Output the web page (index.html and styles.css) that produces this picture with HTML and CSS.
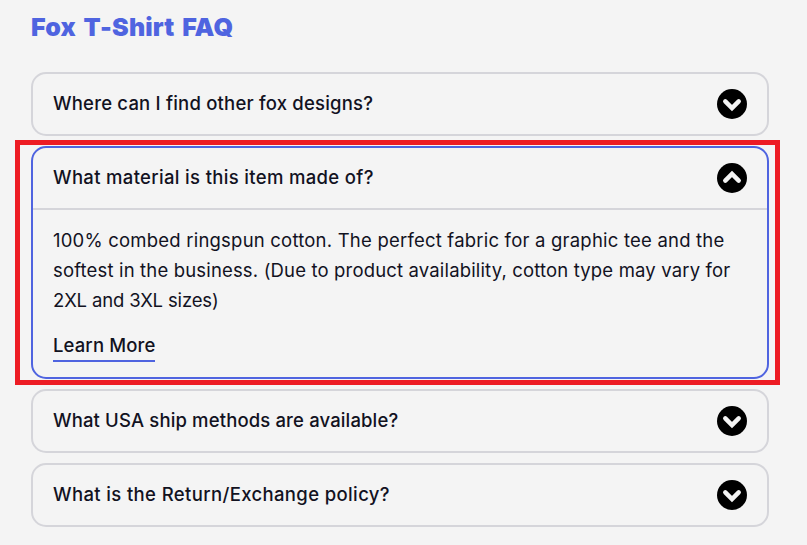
FILE: index.html
```html
<!DOCTYPE html>
<html lang="en">
<head>
  <meta charset="UTF-8">
  <meta name="viewport" content="width=device-width, initial-scale=1.0">
  <title>Fox T-Shirt FAQ</title>
  <link rel="stylesheet" href="styles.css">
</head>
<body>
  <section class="faq">
    <h2>Fox T-Shirt FAQ</h2>

    <div class="faq-list">
      <div class="faq-item">
        <button class="faq-question">
          <span class="q-designs">Where can I find other fox designs?</span>
          <svg class="faq-icon" viewBox="0 0 30 30"><circle cx="15" cy="15" r="15"/><path d="M8.3 12.3L15 19L21.7 12.3"/></svg>
        </button>
      </div>

      <div class="faq-item open">
        <button class="faq-question">
          <span class="q-material">What material is this item made of?</span>
          <svg class="faq-icon" viewBox="0 0 30 30"><circle cx="15" cy="15" r="15"/><path d="M8.3 12.3L15 19L21.7 12.3"/></svg>
        </button>
        <div class="faq-answer">
          <p>
            <span class="line line-1">100% combed ringspun cotton. The perfect fabric for a graphic tee and the</span>
            <span class="line line-2">softest in the business. (Due to product availability, cotton type may vary for</span>
            <span class="line line-3">2XL and 3XL sizes)</span>
          </p>
          <a href="#" class="learn-more">Learn More</a>
        </div>
        <div class="highlight"></div>
      </div>

      <div class="faq-item">
        <button class="faq-question">
          <span class="q-shipping">What USA ship methods are available?</span>
          <svg class="faq-icon" viewBox="0 0 30 30"><circle cx="15" cy="15" r="15"/><path d="M8.3 12.3L15 19L21.7 12.3"/></svg>
        </button>
      </div>

      <div class="faq-item">
        <button class="faq-question">
          <span class="q-returns">What is the Return/Exchange policy?</span>
          <svg class="faq-icon" viewBox="0 0 30 30"><circle cx="15" cy="15" r="15"/><path d="M8.3 12.3L15 19L21.7 12.3"/></svg>
        </button>
      </div>
    </div>
  </section>
</body>
</html>
```

FILE: styles.css
```css
* {
  box-sizing: border-box;
}
body {
  margin: 0;
  background-color: #f4f4f4;
  color: #12121f;
  font-family: Inter, "Liberation Sans", sans-serif;
}
.faq {
  width: 738px;
  margin-left: 31px;
  padding-top: 10px;
}
h2 {
  margin: 0 0 28px;
  color: #4f64e0;
  font-size: 25px;
  font-weight: 900;
  line-height: 34px;
  letter-spacing: 0.15px;
  word-spacing: 2.5px;
}
.faq-list {
  display: flex;
  flex-direction: column;
  gap: 10px;
}
.faq-item {
  position: relative;
  border: 2px solid #d5d5da;
  border-radius: 15px;
}
.faq-item.open {
  height: 233px;
  border-color: #4f64e0;
}
.faq-question {
  display: flex;
  align-items: center;
  justify-content: space-between;
  width: 100%;
  height: 60px;
  padding: 0 20px;
  border: none;
  background: none;
  color: inherit;
  font-family: inherit;
  font-size: 18.5px;
  font-weight: 500;
  line-height: 30px;
  cursor: pointer;
}
.faq-question span {
  padding-bottom: 2px;
}
.q-designs {
  letter-spacing: 0.2px;
}
.q-material {
  letter-spacing: 0.33px;
}
.q-shipping {
  letter-spacing: 0.14px;
}
.q-returns {
  letter-spacing: 0.37px;
}
.faq-icon {
  width: 30px;
  height: 30px;
}
.faq-icon path {
  fill: none;
  stroke: #f4f4f4;
  stroke-width: 4.5;
  stroke-linecap: round;
}
.open .faq-icon {
  transform: rotate(180deg);
}
.faq-answer {
  padding: 15px 20px;
  border-top: 2px solid #d5d5da;
  font-size: 18.5px;
  line-height: 30px;
}
.faq-answer p {
  margin: 0 0 15px;
}
.line {
  display: block;
  width: max-content;
}
.line-1 {
  letter-spacing: 0.21px;
}
.line-2 {
  letter-spacing: 0.16px;
}
.line-3 {
  letter-spacing: -0.15px;
}
.learn-more {
  display: inline-block;
  height: 32px;
  border-bottom: 2px solid #4f64e0;
  color: inherit;
  font-weight: 500;
  letter-spacing: 0.12px;
  text-decoration: none;
}
/* red frame around the open question */
.highlight {
  position: absolute;
  top: -8px;
  right: -13px;
  bottom: -8px;
  left: -18px;
  border: 5px solid #ed1c24;
  pointer-events: none;
}
```
